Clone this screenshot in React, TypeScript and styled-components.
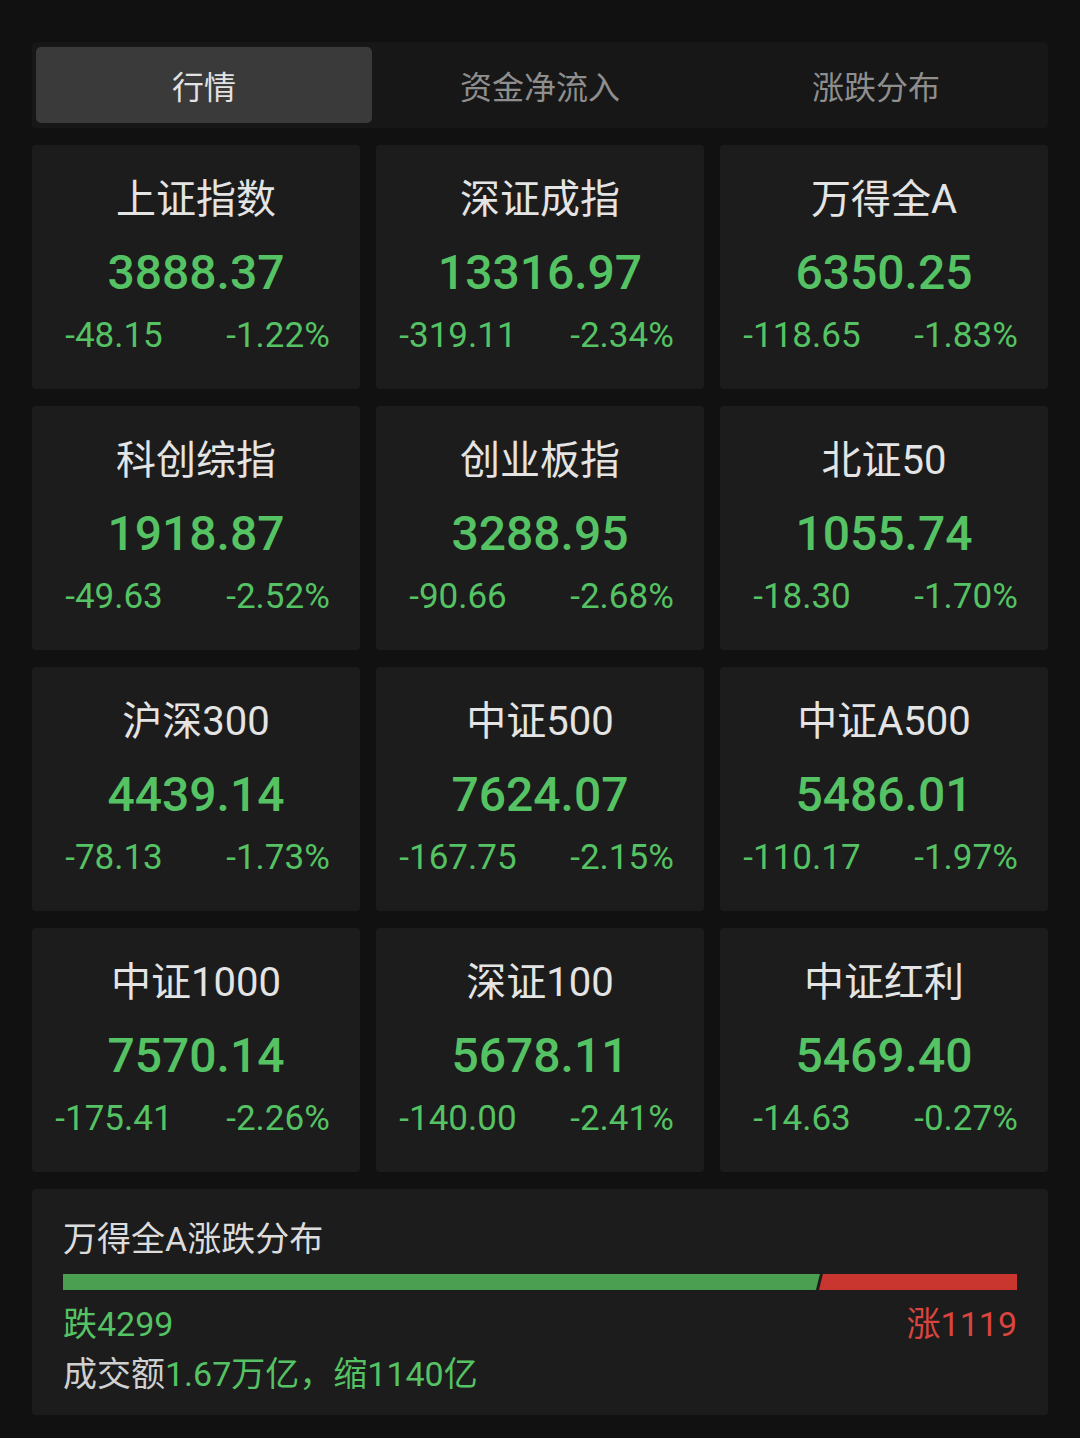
import { createGlobalStyle } from "styled-components";
import styled from "styled-components";

const GlobalStyle = createGlobalStyle`
  body {
    margin: 0;
    background: #111111;
    font-family: Roboto, "Noto Sans CJK SC", sans-serif;
  }
`;

const Page = styled.div`
  width: 1080px;
  min-height: 1438px;
  box-sizing: border-box;
  padding: 42px 32px 24px;
  background: #111111;
  display: flex;
  flex-direction: column;
  gap: 17px;
`;

const TabBar = styled.div`
  display: grid;
  grid-template-columns: repeat(3, 1fr);
  padding: 5px 4px;
  background: #171717;
  border-radius: 4px;
`;

const Tab = styled.div<{ $active?: boolean }>`
  height: 76px;
  display: flex;
  align-items: center;
  justify-content: center;
  font-size: 32px;
  color: ${(p) => (p.$active ? "#e2e2e2" : "#8e8e8e")};
  background: ${(p) => (p.$active ? "#3a3a3a" : "transparent")};
  border-radius: 5px;
`;

const Grid = styled.div`
  display: grid;
  grid-template-columns: repeat(3, 1fr);
  column-gap: 16px;
  row-gap: 17px;
`;

const Card = styled.div`
  height: 244px;
  box-sizing: border-box;
  padding-top: 27px;
  background: #1c1c1c;
  border-radius: 4px;
  display: flex;
  flex-direction: column;
  align-items: center;
`;

const Name = styled.div`
  font-size: 40px;
  line-height: 56px;
  color: #e4e4e4;
`;

const Value = styled.div`
  margin-top: 15px;
  font-size: 48px;
  line-height: 60px;
  font-weight: 500;
  color: #55c264;
`;

const Changes = styled.div`
  margin-top: 10px;
  width: 100%;
  display: grid;
  grid-template-columns: 1fr 1fr;
  font-size: 35px;
  line-height: 46px;
  font-weight: 400;
  color: #55c264;
  text-align: center;
`;

const Panel = styled.div`
  height: 226px;
  box-sizing: border-box;
  padding: 28px 31px 19px;
  background: #1c1c1c;
  border-radius: 4px;
  display: flex;
  flex-direction: column;
`;

const PanelTitle = styled.div`
  font-size: 34px;
  line-height: 44px;
  color: #dcdcdc;
`;

const Bar = styled.div`
  margin-top: 13px;
  height: 16px;
  display: flex;
  gap: 2px;
`;

const Segment = styled.div<{ $color: string; $side: "left" | "right" }>`
  height: 100%;
  background: ${(p) => p.$color};
  clip-path: ${(p) =>
    p.$side === "left"
      ? "polygon(0 0, 100% 0, calc(100% - 4px) 100%, 0 100%)"
      : "polygon(4px 0, 100% 0, 100% 100%, 0 100%)"};
  margin-right: ${(p) => (p.$side === "left" ? "-3px" : "0")};
`;

const CountRow = styled.div`
  margin-top: 12px;
  display: flex;
  justify-content: space-between;
  font-size: 34px;
  line-height: 44px;
  font-weight: 400;
`;

const Count = styled.span<{ $up?: boolean }>`
  color: ${(p) => (p.$up ? "#d8453e" : "#55c264")};
`;

const Turnover = styled.div`
  margin-top: 6px;
  font-size: 34px;
  line-height: 44px;
  font-weight: 400;
  color: #d0d0d0;
`;

const Green = styled.span`
  color: #55c264;
`;

const indices = [
  ["上证指数", "3888.37", "-48.15", "-1.22%"],
  ["深证成指", "13316.97", "-319.11", "-2.34%"],
  ["万得全A", "6350.25", "-118.65", "-1.83%"],
  ["科创综指", "1918.87", "-49.63", "-2.52%"],
  ["创业板指", "3288.95", "-90.66", "-2.68%"],
  ["北证50", "1055.74", "-18.30", "-1.70%"],
  ["沪深300", "4439.14", "-78.13", "-1.73%"],
  ["中证500", "7624.07", "-167.75", "-2.15%"],
  ["中证A500", "5486.01", "-110.17", "-1.97%"],
  ["中证1000", "7570.14", "-175.41", "-2.26%"],
  ["深证100", "5678.11", "-140.00", "-2.41%"],
  ["中证红利", "5469.40", "-14.63", "-0.27%"],
];

const down = 4299;
const up = 1119;

export default function App() {
  const downPct = (down / (down + up)) * 100;
  return (
    <>
      <GlobalStyle />
      <Page>
        <TabBar>
          <Tab $active>行情</Tab>
          <Tab>资金净流入</Tab>
          <Tab>涨跌分布</Tab>
        </TabBar>
        <Grid>
          {indices.map(([name, value, chg, pct]) => (
            <Card key={name}>
              <Name>{name}</Name>
              <Value>{value}</Value>
              <Changes>
                <span>{chg}</span>
                <span>{pct}</span>
              </Changes>
            </Card>
          ))}
        </Grid>
        <Panel>
          <PanelTitle>万得全A涨跌分布</PanelTitle>
          <Bar>
            <Segment $side="left" $color="#4a9f50" style={{ width: `${downPct}%` }} />
            <Segment $side="right" $color="#c9352f" style={{ flex: 1 }} />
          </Bar>
          <CountRow>
            <Count>跌{down}</Count>
            <Count $up>涨{up}</Count>
          </CountRow>
          <Turnover>
            成交额<Green>1.67万亿，缩1140亿</Green>
          </Turnover>
        </Panel>
      </Page>
    </>
  );
}
